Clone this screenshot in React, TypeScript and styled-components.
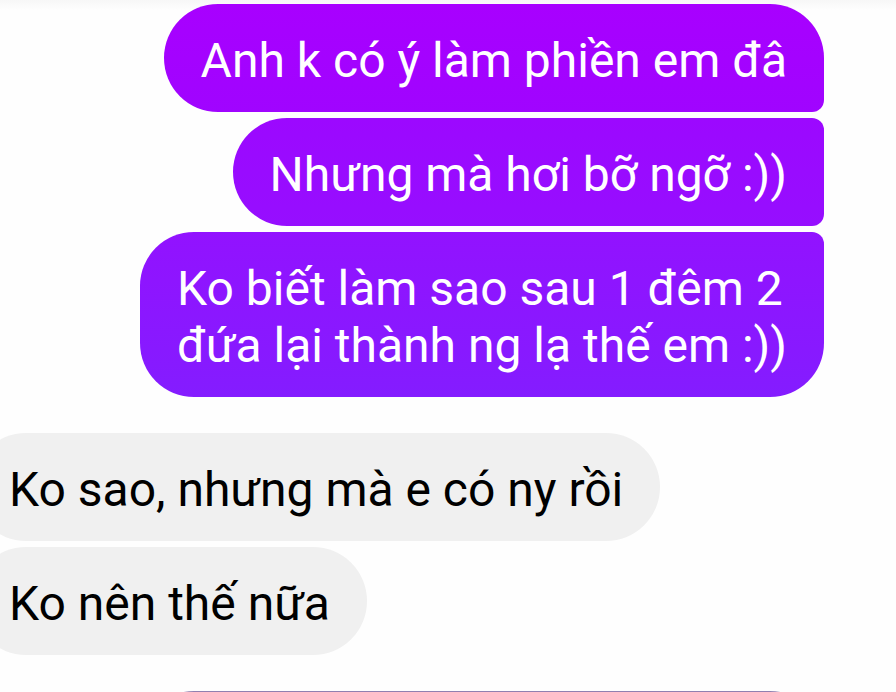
import React from "react";
import styled, { createGlobalStyle } from "styled-components";

const GlobalStyle = createGlobalStyle`
  * { box-sizing: border-box; }
  body {
    margin: 0;
    background: #fefefe;
    font-family: Roboto, sans-serif;
    overflow: hidden;
  }
`;

const Thread = styled.main`
  display: flex;
  flex-direction: column;
  gap: 36px;
  height: 100vh;
  overflow: hidden;
  padding-top: 4px;
  background: linear-gradient(#f7f7f7, #fefefe 10px);
`;

const Group = styled.section<{ $own?: boolean }>`
  display: flex;
  flex-direction: column;
  flex-shrink: 0;
  gap: 6px;
  align-items: ${(p) => (p.$own ? "flex-end" : "flex-start")};
  padding-right: ${(p) => (p.$own ? "72px" : "0")};
  margin-left: ${(p) => (p.$own ? "0" : "-28px")};
`;

const Bubble = styled.p<{ $fill: string; $ink: string; $radius: string }>`
  margin: 0;
  padding: 28px 37px 23px;
  font-size: 48px;
  line-height: 57px;
  white-space: pre-line;
  color: ${(p) => p.$ink};
  background: ${(p) => p.$fill};
  border-radius: ${(p) => p.$radius};
`;

const NextBubble = styled.div`
  width: 83%;
  height: 108px;
  border-radius: 54px;
  background: #9080b0;
`;

const sent = [
  { text: "Anh k có ý làm phiền em đâ", fill: "linear-gradient(#a800ff, #a004ff)", radius: "54px 54px 12px 54px" },
  { text: "Nhưng mà hơi bỡ ngỡ :))", fill: "linear-gradient(#9c08ff, #960eff)", radius: "54px 12px 12px 54px" },
  { text: "Ko biết làm sao sau 1 đêm 2\nđứa lại thành ng lạ thế em :))", fill: "linear-gradient(#9212ff, #841cff)", radius: "54px 12px 54px 54px" },
];

const received = ["Ko sao, nhưng mà e có ny rồi", "Ko nên thế nữa"];

export default function App() {
  return (
    <>
      <GlobalStyle />
      <Thread lang="vi">
        <Group $own>
          {sent.map((m) => (
            <Bubble key={m.text} $fill={m.fill} $ink="#fff" $radius={m.radius}>{m.text}</Bubble>
          ))}
        </Group>
        <Group>
          {received.map((text) => (
            <Bubble key={text} $fill="#f0f0f0" $ink="#000" $radius="54px">{text}</Bubble>
          ))}
        </Group>
        <Group $own>
          <NextBubble />
        </Group>
      </Thread>
    </>
  );
}
